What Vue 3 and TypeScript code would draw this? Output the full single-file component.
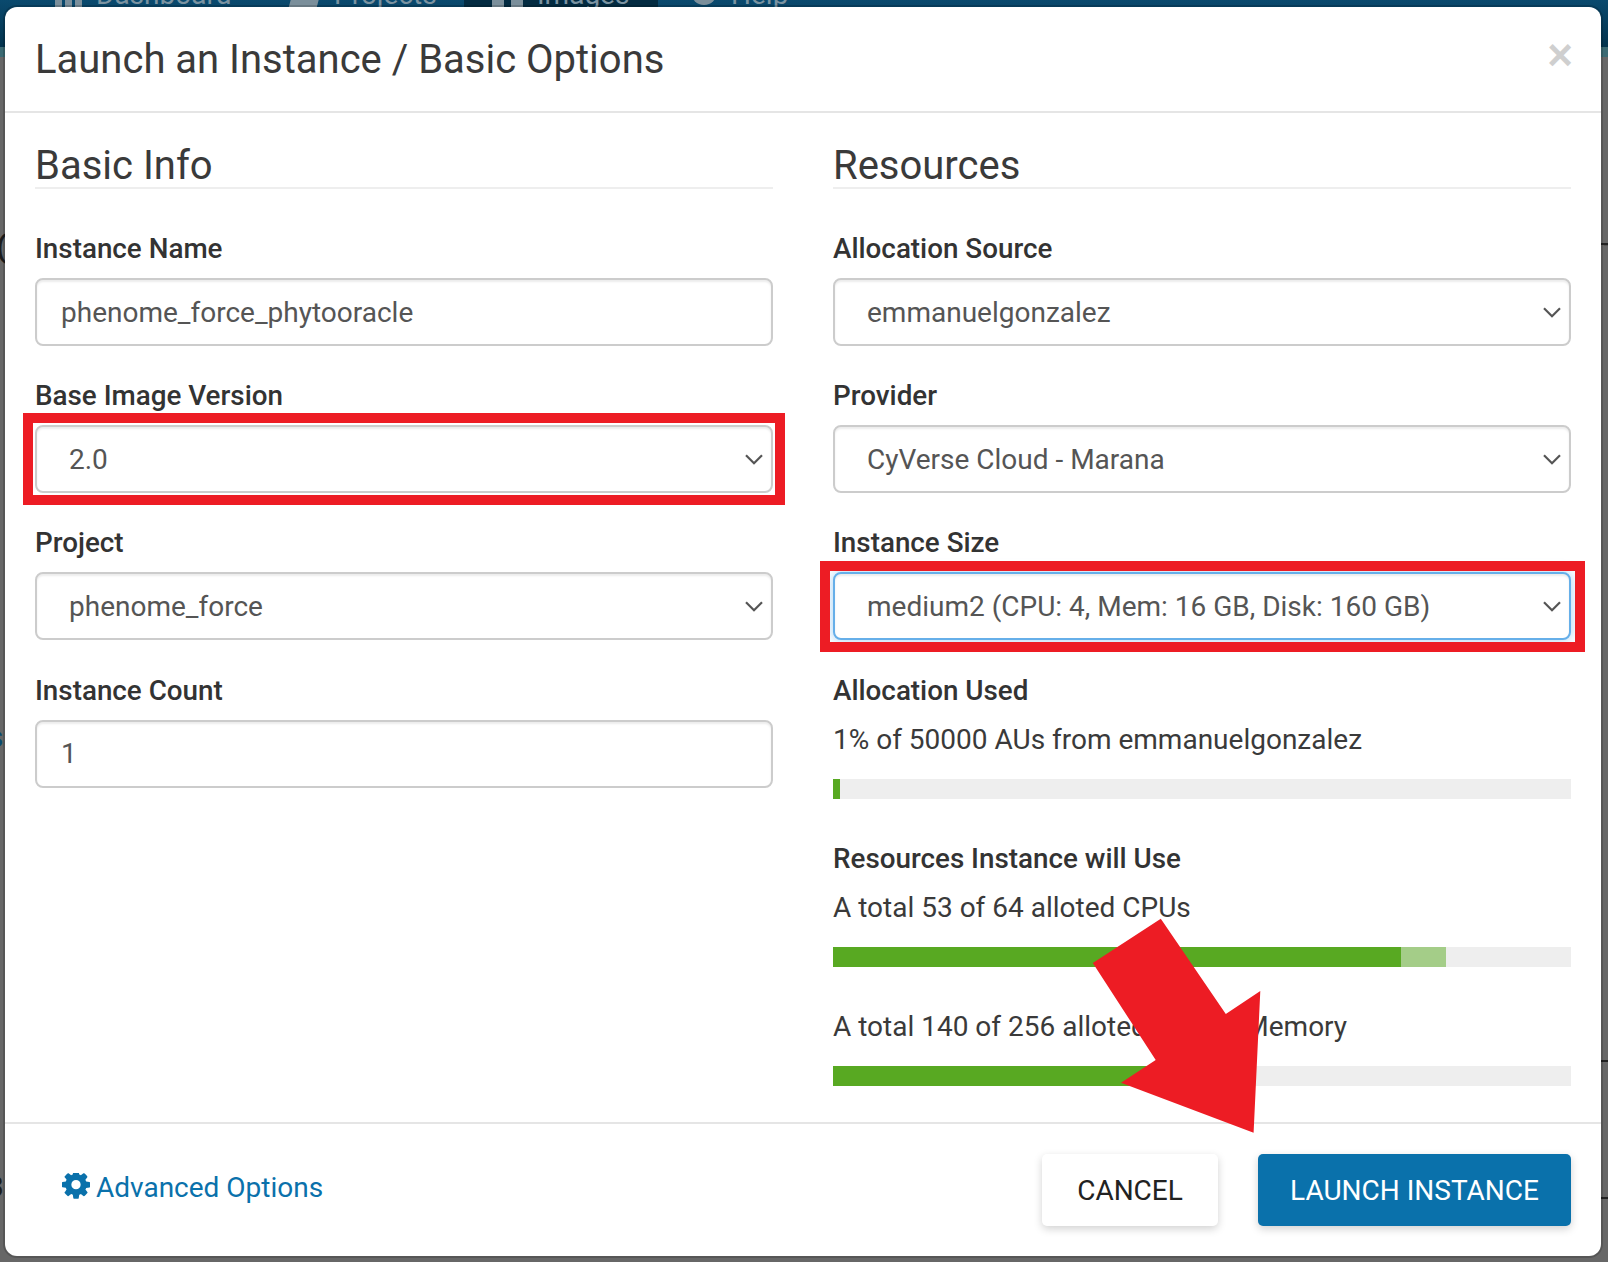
<script setup lang="ts">
interface Field {
  label: string
  value: string
  kind: 'input' | 'select'
  mark?: 'plain' | 'focus'
}

const leftFields: Field[] = [
  { label: 'Instance Name', value: 'phenome_force_phytooracle', kind: 'input' },
  { label: 'Base Image Version', value: '2.0', kind: 'select', mark: 'plain' },
  { label: 'Project', value: 'phenome_force', kind: 'select' },
  { label: 'Instance Count', value: '1', kind: 'input' },
]
const rightFields: Field[] = [
  { label: 'Allocation Source', value: 'emmanuelgonzalez', kind: 'select' },
  { label: 'Provider', value: 'CyVerse Cloud - Marana', kind: 'select' },
  { label: 'Instance Size', value: 'medium2 (CPU: 4, Mem: 16 GB, Disk: 160 GB)', kind: 'select', mark: 'focus' },
]
const gear =
  'M1024 640q0-106-75-181t-181-75-181 75-75 181 75 181 181 75 181-75 75-181zm512-109v222q0 12-8 23t-20 13l-185 28q-19 54-39 91 35 50 107 138 10 12 10 25t-9 23q-27 37-99 108t-94 71q-12 0-26-9l-138-108q-44 23-91 38-16 136-29 186-7 28-36 28h-222q-14 0-24.5-8.5t-11.5-21.5l-28-184q-49-16-90-37l-141 107q-10 9-25 9-14 0-25-11-126-114-165-168-7-10-7-23 0-12 8-23 15-21 51-66.5t54-70.5q-27-50-41-99l-183-27q-13-2-21-12.5t-8-23.5v-222q0-12 8-23t19-13l186-28q14-46 39-92-40-57-107-138-10-12-10-24 0-10 9-23 26-36 98.5-107.5t94.5-71.5q13 0 26 10l138 107q44-23 91-38 16-136 29-186 7-28 36-28h222q14 0 24.5 8.5t11.5 21.5l28 184q49 16 90 37l142-107q9-9 24-9 13 0 25 10 129 119 165 170 7 8 7 22 0 12-8 23-15 21-51 66.5t-54 70.5q26 50 41 98l183 28q13 2 21 12.5t8 23.5z'
</script>

<template>
  <div class="page">
    <header class="nav">
      <span class="nav-item dash">
        <svg class="nav-ico" width="27" height="30" viewBox="0 0 27 30"><path d="M0 0h7v30H0zM10 0h7v30h-7zM20 0h7v30h-7z" /></svg>
        Dashboard
      </span>
      <span class="nav-item proj">
        <svg class="nav-ico" width="36" height="30" viewBox="0 0 36 30"><path d="M8 0h28l-8 30H0z" /></svg>
        Projects
      </span>
      <span class="nav-item imgs">
        <svg class="nav-ico" width="31" height="30" viewBox="0 0 31 30"><path d="M0 0h12v30H0zM19 0h12v30H19z" /></svg>
        Images
      </span>
      <span class="nav-item help">
        <svg class="nav-ico" width="26" height="30" viewBox="0 0 26 30"><circle cx="13" cy="12" r="13" /></svg>
        Help
      </span>
    </header>
    <div class="teal"></div>

    <span class="bg-glyph g1">(</span>
    <span class="bg-glyph g2">s</span>
    <span class="bg-glyph g3">3</span>
    <span class="bg-glyph g4">T</span>
    <i class="tick t1"></i>
    <i class="tick t2"></i>
    <i class="tick t3"></i>

    <section class="modal">
      <div class="modal-head">
        <h1>Launch an Instance / Basic Options</h1>
        <span class="close">×</span>
      </div>

      <div class="modal-body">
        <div class="col">
          <h2>Basic Info</h2>
          <div v-for="f in leftFields" :key="f.label" class="group">
            <label>{{ f.label }}</label>
            <div class="control" :class="f.mark">
              <input v-if="f.kind === 'input'" type="text" :value="f.value" readonly />
              <template v-else>
                <select><option>{{ f.value }}</option></select>
                <svg class="chev" width="18" height="11" viewBox="0 0 18 11"><path d="M1 1.2 9 9.2 17 1.2" /></svg>
              </template>
            </div>
          </div>
        </div>

        <div class="col">
          <h2>Resources</h2>
          <div v-for="f in rightFields" :key="f.label" class="group">
            <label>{{ f.label }}</label>
            <div class="control" :class="f.mark">
              <select><option>{{ f.value }}</option></select>
              <svg class="chev" width="18" height="11" viewBox="0 0 18 11"><path d="M1 1.2 9 9.2 17 1.2" /></svg>
            </div>
          </div>

          <label class="used-label">Allocation Used</label>
          <p class="stat first">1% of 50000 AUs from emmanuelgonzalez</p>
          <div class="bar"><span class="fill" :style="{ width: '1%' }"></span></div>

          <label class="section-label">Resources Instance will Use</label>
          <p class="stat cpu">A total 53 of 64 alloted CPUs</p>
          <div class="bar">
            <span class="fill" :style="{ width: '77%' }"></span>
            <span class="fill extra" :style="{ width: '6.1%' }"></span>
          </div>

          <p class="stat second">A total 140 of 256 alloted GBs of Memory</p>
          <div class="bar"><span class="fill" :style="{ width: '54.7%' }"></span></div>
        </div>
      </div>

      <div class="modal-foot">
        <a class="advanced">
          <svg width="28" height="28" viewBox="0 0 1536 1536"><path :d="gear" /></svg>
          Advanced Options
        </a>
        <div class="buttons">
          <button class="btn cancel">CANCEL</button>
          <button class="btn launch">LAUNCH INSTANCE</button>
        </div>
      </div>
    </section>

    <svg class="arrow" width="1608" height="1262" viewBox="0 0 1608 1262">
      <polygon points="1253.6,1132.7 1121,1082.7 1155.7,1060 1092.8,963 1160.8,918.7 1225.8,1014 1260.3,991" />
    </svg>
  </div>
</template>

<style scoped>
.page {
  position: relative;
  width: 1608px;
  height: 1262px;
  overflow: hidden;
  background: #676767;
  font-family: Roboto, "Liberation Sans", sans-serif;
  color: #333;
}
.nav {
  height: 47px;
  background: linear-gradient(#0a4a6e, #02324d);
  overflow: hidden;
  position: relative;
}
.nav-item {
  position: absolute;
  top: -20px;
  height: 47px;
  display: flex;
  gap: 14px;
  font-size: 28px;
  line-height: 30px;
  color: #7b93a1;
}
.nav-ico { fill: #7b8f9b; flex: none; }
.dash { left: 55px; }
.proj { left: 288px; gap: 10px; }
.imgs { left: 464px; width: 194px; padding-left: 28px; box-sizing: border-box; background: #032b41; height: 67px; }
.help { left: 691px; }
.teal { height: 10px; background: #3b6a73; }

.bg-glyph {
  position: absolute;
  font-size: 30px;
  line-height: 30px;
  color: #1c1c1c;
}
.g1 { left: -4px; top: 232px; font-weight: 700; }
.g2 { left: -12px; top: 722px; color: #0a4a6e; }
.g3 { left: -13px; top: 1172px; }
.g4 { left: 1603px; top: 239px; }
.tick { position: absolute; height: 2px; background: #222; }
.t1 { left: 1601px; width: 7px; top: 243px; }
.t2 { left: 1601px; width: 7px; top: 1060px; }
.t3 { left: 1601px; width: 7px; top: 1197px; }

.modal {
  position: absolute;
  left: 5px;
  top: 7px;
  width: 1596px;
  height: 1249px;
  background: #fff;
  border-radius: 12px;
  box-shadow: 0 0 0 2px rgba(0, 0, 0, 0.16);
  display: flex;
  flex-direction: column;
}
.modal-head {
  height: 106px;
  box-sizing: border-box;
  border-bottom: 2px solid #e5e5e5;
  display: flex;
  justify-content: space-between;
  padding: 0 28px 0 30px;
}
h1 {
  margin: 0;
  padding-top: 3px;
  font-size: 40px;
  font-weight: 400;
  line-height: 99px;
  color: #3a3a3a;
}
.close {
  font-family: "Liberation Sans", sans-serif;
  font-weight: 700;
  font-size: 44px;
  line-height: 96px;
  color: #cfcfcf;
}
.modal-body {
  height: 1009px;
  box-sizing: border-box;
  padding: 0 30px;
  display: grid;
  grid-template-columns: 738px 738px;
  column-gap: 60px;
}
h2 {
  margin: 0 0 39px;
  height: 76px;
  box-sizing: border-box;
  padding-top: 29px;
  border-bottom: 2px solid #eee;
  font-size: 40px;
  font-weight: 400;
  line-height: 48px;
  color: #3a3a3a;
}
.group { margin-bottom: 29.2px; }
label {
  display: block;
  height: 42px;
  margin-bottom: 8px;
  font-size: 27.8px;
  font-weight: 500;
  line-height: 42px;
  color: #333;
}
.used-label { margin-bottom: 7px; }
.control { position: relative; height: 68px; }
input, select {
  display: block;
  width: 100%;
  height: 68px;
  box-sizing: border-box;
  margin: 0;
  border: 2px solid #ccc;
  border-radius: 8px;
  background: #fff;
  box-shadow: inset 0 2px 2px rgba(0, 0, 0, 0.075);
  font-family: Roboto, "Liberation Sans", sans-serif;
  font-size: 28px;
  color: #555;
  outline: none;
}
input { padding: 0 24px; }
select { padding: 0 40px 0 32px; appearance: none; }
.chev {
  position: absolute;
  right: 10px;
  top: 29px;
  fill: none;
  stroke: #555;
  stroke-width: 2.2;
  pointer-events: none;
}
.control.focus select {
  border-color: #66afe9;
  box-shadow: inset 0 2px 2px rgba(0, 0, 0, 0.075), 0 0 12px rgba(102, 175, 233, 0.6);
}
.control.plain::after,
.control.focus::after {
  content: "";
  position: absolute;
  border: 10px solid #ed1c24;
  pointer-events: none;
}
.control.plain::after { inset: -12px; }
.control.focus::after { inset: -11px -14px -12px -13px; }

.stat {
  margin: 0;
  height: 42px;
  font-size: 28px;
  line-height: 42px;
  color: #3a3a3a;
}
.stat.first { margin-bottom: 18.6px; }
.stat.cpu { margin-bottom: 17.6px; }
.section-label { margin-top: 39px; margin-bottom: 7px; }
.stat.second { margin-top: 39px; margin-bottom: 18px; }
.bar {
  display: flex;
  height: 20px;
  background: #eee;
}
.fill { display: block; height: 100%; background: #58a922; }
.fill.extra { background: #a4cd88; }

.modal-foot {
  flex: 1;
  border-top: 2px solid #e5e5e5;
  display: flex;
  justify-content: space-between;
  padding: 30px 30px 0 57px;
}
.advanced {
  display: flex;
  align-items: center;
  gap: 6px;
  height: 66px;
  font-size: 28px;
  color: #0a71ab;
}
.advanced svg { fill: #0a71ab; }
.buttons { display: flex; gap: 40px; }
.btn {
  height: 72px;
  border: 0;
  border-radius: 5px;
  font-family: Roboto, "Liberation Sans", sans-serif;
  font-size: 28px;
  box-shadow: 0 3px 8px rgba(0, 0, 0, 0.18);
}
.cancel { width: 176px; background: #fff; color: #222; }
.launch { width: 313px; background: #0a71ab; color: #fff; }

.arrow {
  position: absolute;
  left: 0;
  top: 0;
  fill: #ed1c24;
  pointer-events: none;
}
</style>

<style>
html, body { margin: 0; padding: 0; }
</style>
